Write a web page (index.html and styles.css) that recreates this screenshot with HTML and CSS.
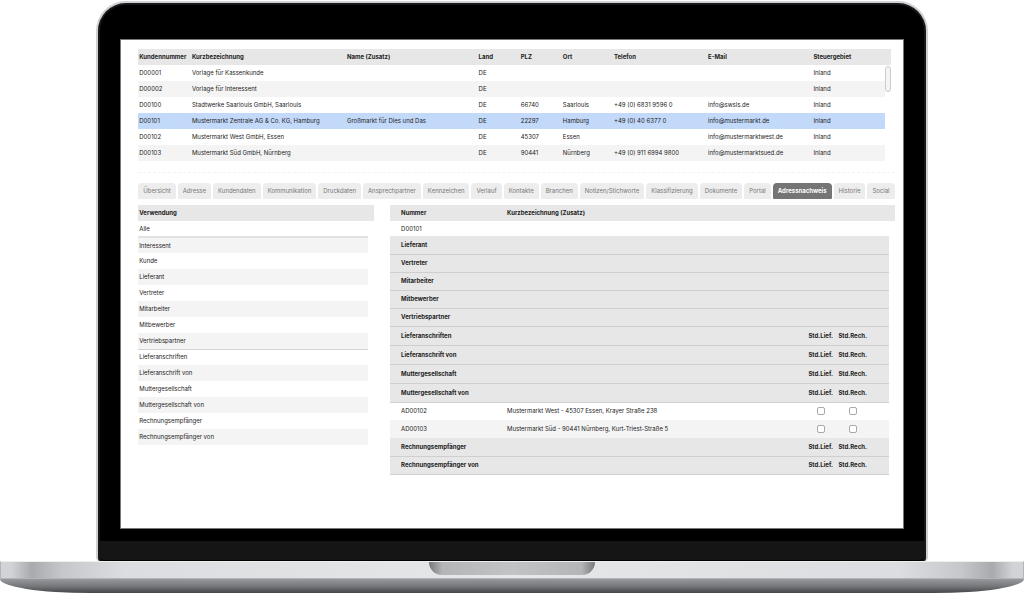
FILE: index.html
```html
<!DOCTYPE html>
<html lang="de">
<head>
<meta charset="utf-8">
<meta name="viewport" content="width=device-width, initial-scale=1">
<title>Kunden – Adressnachweis</title>
<link rel="stylesheet" href="styles.css">
</head>
<body>
<div class="lid">
<main class="screen">
  <section class="customers">
    <table class="grid customer-grid">
      <colgroup><col class="c-no"><col class="c-name"><col class="c-extra"><col class="c-land"><col class="c-plz"><col class="c-ort"><col class="c-tel"><col class="c-mail"><col class="c-tax"><col class="c-gutter"></colgroup>
      <thead><tr><th>Kundennummer</th><th>Kurzbezeichnung</th><th>Name (Zusatz)</th><th>Land</th><th>PLZ</th><th>Ort</th><th>Telefon</th><th>E-Mail</th><th colspan="2">Steuergebiet</th></tr></thead>
      <tbody>
        <tr><td>D00001</td><td>Vorlage für Kassenkunde</td><td></td><td>DE</td><td></td><td></td><td></td><td></td><td>Inland</td></tr>
        <tr><td>D00002</td><td>Vorlage für Interessent</td><td></td><td>DE</td><td></td><td></td><td></td><td></td><td>Inland</td></tr>
        <tr><td>D00100</td><td>Stadtwerke Saarlouis GmbH, Saarlouis</td><td></td><td>DE</td><td>66740</td><td>Saarlouis</td><td>+49 (0) 6831 9596 0</td><td>info@swsls.de</td><td>Inland</td></tr>
        <tr class="selected"><td>D00101</td><td>Mustermarkt Zentrale AG &amp; Co. KG, Hamburg</td><td>Großmarkt für Dies und Das</td><td>DE</td><td>22297</td><td>Hamburg</td><td>+49 (0) 40 6377 0</td><td>info@mustermarkt.de</td><td>Inland</td></tr>
        <tr><td>D00102</td><td>Mustermarkt West GmbH, Essen</td><td></td><td>DE</td><td>45307</td><td>Essen</td><td></td><td>info@mustermarktwest.de</td><td>Inland</td></tr>
        <tr><td>D00103</td><td>Mustermarkt Süd GmbH, Nürnberg</td><td></td><td>DE</td><td>90441</td><td>Nürnberg</td><td>+49 (0) 911 6994 9800</td><td>info@mustermarktsued.de</td><td>Inland</td></tr>
      </tbody>
    </table>
    <span class="scroll-thumb"></span>
  </section>

  <nav class="tabs">
    <button class="tab">Übersicht</button><button class="tab">Adresse</button><button class="tab">Kundendaten</button><button class="tab">Kommunikation</button><button class="tab">Druckdaten</button><button class="tab">Ansprechpartner</button><button class="tab">Kennzeichen</button><button class="tab">Verlauf</button><button class="tab">Kontakte</button><button class="tab">Branchen</button><button class="tab">Notizen/Stichworte</button><button class="tab">Klassifizierung</button><button class="tab">Dokumente</button><button class="tab">Portal</button><button class="tab active">Adressnachweis</button><button class="tab">Historie</button><button class="tab">Social</button>
  </nav>

  <div class="panels">
    <table class="grid usage-grid">
      <colgroup><col><col class="c-gutter"></colgroup>
      <thead><tr><th colspan="2">Verwendung</th></tr></thead>
      <tbody>
        <tr class="section-end strong"><td>Alle</td></tr>
        <tr><td>Interessent</td></tr>
        <tr><td>Kunde</td></tr>
        <tr><td>Lieferant</td></tr>
        <tr><td>Vertreter</td></tr>
        <tr><td>Mitarbeiter</td></tr>
        <tr><td>Mitbewerber</td></tr>
        <tr class="section-end"><td>Vertriebspartner</td></tr>
        <tr><td>Lieferanschriften</td></tr>
        <tr><td>Lieferanschrift von</td></tr>
        <tr><td>Muttergesellschaft</td></tr>
        <tr><td>Muttergesellschaft von</td></tr>
        <tr><td>Rechnungsempfänger</td></tr>
        <tr><td>Rechnungsempfänger von</td></tr>
      </tbody>
    </table>

    <table class="grid proof-grid">
      <colgroup><col class="p-no"><col><col class="p-flag"><col class="p-flag"><col class="p-end"><col class="c-gutter"></colgroup>
      <thead><tr><th>Nummer</th><th colspan="5">Kurzbezeichnung (Zusatz)</th></tr></thead>
      <tbody>
        <tr class="own"><td>D00101</td><td colspan="4"></td></tr>
        <tr class="group"><th colspan="5">Lieferant</th></tr>
        <tr class="group"><th colspan="5">Vertreter</th></tr>
        <tr class="group"><th colspan="5">Mitarbeiter</th></tr>
        <tr class="group"><th colspan="5">Mitbewerber</th></tr>
        <tr class="group"><th colspan="5">Vertriebspartner</th></tr>
        <tr class="group flags"><th colspan="2">Lieferanschriften</th><th>Std.Lief.</th><th>Std.Rech.</th><th></th></tr>
        <tr class="group flags"><th colspan="2">Lieferanschrift von</th><th>Std.Lief.</th><th>Std.Rech.</th><th></th></tr>
        <tr class="group flags"><th colspan="2">Muttergesellschaft</th><th>Std.Lief.</th><th>Std.Rech.</th><th></th></tr>
        <tr class="group flags"><th colspan="2">Muttergesellschaft von</th><th>Std.Lief.</th><th>Std.Rech.</th><th></th></tr>
        <tr class="entry"><td>AD00102</td><td>Mustermarkt West - 45307 Essen, Krayer Straße 238</td><td class="flag"><input type="checkbox" aria-label="Std.Lief. AD00102"></td><td class="flag"><input type="checkbox" aria-label="Std.Rech. AD00102"></td><td></td></tr>
        <tr class="entry alt"><td>AD00103</td><td>Mustermarkt Süd - 90441 Nürnberg, Kurt-Triest-Straße 5</td><td class="flag"><input type="checkbox" aria-label="Std.Lief. AD00103"></td><td class="flag"><input type="checkbox" aria-label="Std.Rech. AD00103"></td><td></td></tr>
        <tr class="group flags compact"><th colspan="2">Rechnungsempfänger</th><th>Std.Lief.</th><th>Std.Rech.</th><th></th></tr>
        <tr class="group flags compact"><th colspan="2">Rechnungsempfänger von</th><th>Std.Lief.</th><th>Std.Rech.</th><th></th></tr>
      </tbody>
    </table>
  </div>
</main>
<div class="chin"></div>
</div>
<div class="base">
  <div class="deck"><div class="notch"></div></div>
  <div class="underside"></div>
</div>
</body>
</html>
```

FILE: styles.css
```css
* { box-sizing: border-box; }

body {
  margin: 0;
  min-height: 100vh;
  padding-top: 1px;
  display: flex;
  flex-direction: column;
  background: #fff;
  color: #222;
  font: 6px/8px Inter, "Liberation Sans", Arial, sans-serif;
}

/* Laptop display */
.lid {
  flex: 1;
  width: 81.2%;
  margin: 0 auto;
  display: flex;
  flex-direction: column;
  background: #000;
  border: 2px solid #cfd0d4;
  border-bottom: 0;
  border-radius: 30px 30px 4px 4px;
  box-shadow: inset 0 0 0 2px #17181a;
}

.screen {
  flex: 1;
  margin: 36px 22px 12px;
  padding: 9px 8px 10px 17px;
  background: #fff;
  border: 1px solid #777;
}

.chin {
  height: 20px;
  margin: 0 2px;
  background: #151515;
  border-bottom: 1px solid #000;
  border-radius: 0 0 4px 4px;
}

/* Tables */
.grid {
  width: 100%;
  table-layout: fixed;
  border-collapse: collapse;
}

.grid th,
.grid td {
  height: 16px;
  padding: 0 1px;
  text-align: left;
  white-space: nowrap;
}

.grid thead th { background: #e7e7e7; }
.grid tbody tr:nth-child(even) td { background: #f4f4f4; }
.grid tbody tr.selected td { background: #c3d9fa; }
.c-gutter { width: 6px; }

.customers {
  position: relative;
  margin-right: 4px;
}

.c-no { width: 7%; }
.c-name { width: 20.6%; }
.c-extra { width: 17.5%; }
.c-land { width: 5.6%; }
.c-plz { width: 5.6%; }
.c-ort { width: 6.8%; }
.c-tel { width: 12.5%; }
.c-mail { width: 14%; }

.scroll-thumb {
  position: absolute;
  top: 17px;
  right: 0;
  width: 6px;
  height: 26px;
  background: #f4f4f4;
  border: 1px solid #ccc;
  border-radius: 3px;
}

/* Tabs */
.tabs {
  display: flex;
  justify-content: space-between;
  margin-top: 11px;
  padding-top: 10px;
  border-top: 1px dashed #f4f4f4;
}

.tab {
  height: 16px;
  padding: 0 5px;
  border: 0;
  border-radius: 4px 4px 1px 1px;
  background: #ededed;
  color: #777;
  font: inherit;
  white-space: nowrap;
}

.tab.active {
  background: #757575;
  color: #fff;
  font-weight: bold;
}

/* Lower panels */
.panels {
  display: grid;
  grid-template-columns: 236fr 505fr;
  gap: 16px;
  align-items: start;
  margin-top: 6px;
}

.usage-grid .section-end td { border-bottom: 1px solid #d4d4d4; }
.usage-grid .section-end.strong td { border-bottom: 2px solid #e2e2e2; }

.p-no { width: 116px; }
.p-flag { width: 32px; }
.p-end { width: 20px; }

.proof-grid tr > :first-child { padding-left: 11px; }
.proof-grid .own td { height: 15px; }

.proof-grid .group th {
  height: 18px;
  background: #e7e7e7;
  border-bottom: 1px solid #cfcfcf;
}

.proof-grid .flags th { height: 19px; }
.proof-grid .compact th { height: 18px; }
.proof-grid .flags th:nth-child(n+2) { text-align: center; }
.proof-grid .entry td { height: 18px; }
.proof-grid tbody .entry td { background: #fff; }
.proof-grid tbody .entry.alt td { background: #f4f4f4; }
.proof-grid .flag { text-align: center; }

.flag input {
  appearance: none;
  display: block;
  width: 8px;
  height: 8px;
  margin: 0 auto;
  background: #fff;
  border: 1px solid #a8a8a8;
  border-radius: 2px;
}

/* Laptop base */
.deck {
  height: 18px;
  display: flex;
  justify-content: center;
  border: 1px solid #b4b5b8;
  border-top-color: #eee;
  background: linear-gradient(90deg, #d2d3d6, #d2d3d6 1%, #a9aaad 3%, #c6c7ca 6%, #dcdde0 12%, #e6e7e9 50%, #dcdde0 88%, #c6c7ca 94%, #a9aaad 97%, #d2d3d6 99%);
}

.notch {
  width: 166px;
  height: 13px;
  border-radius: 0 0 14px 14px;
  background: linear-gradient(90deg, #77787b, #b4b5b7 8%, #c2c3c5 50%, #b4b5b7 92%, #77787b);
}

.underside {
  height: 14px;
  border-radius: 0 0 90px 90px / 0 0 14px 14px;
  background: linear-gradient(#98999d, #77787c 50%, #45464a);
}
```
